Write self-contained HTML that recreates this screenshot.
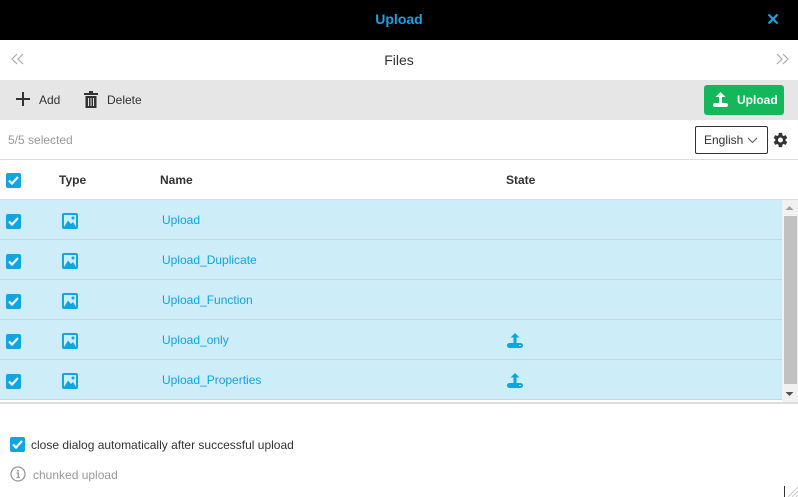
<!DOCTYPE html>
<html><head><meta charset="utf-8"><style>
*{box-sizing:border-box;margin:0;padding:0}
body{width:798px;height:497px;overflow:hidden;background:#fff;font-family:"Liberation Sans",Arial,sans-serif;font-size:12px;color:#333;position:relative}
.abs{position:absolute}
.hdr{left:0;top:0;width:798px;height:40px;background:#000;color:#1ba1e2;font-weight:bold;font-size:14px;text-align:center;line-height:38px}
.files{left:0;top:40px;width:798px;height:40px;text-align:center;line-height:40px;font-size:14px;color:#333}
.tb{left:0;top:80px;width:798px;height:40px;background:#e6e6e6}
.cb{width:15px;height:15px;background:#0ea5e0;border-radius:2px;position:absolute}
.row{position:absolute;left:0;width:782px;height:40px;background:#cdedf9;border-bottom:1px solid #c6d8e0}
.row .nm{position:absolute;left:162px;top:13px;color:#0ea5e0;font-size:12px}
</style></head><body>
<div class="abs hdr">Upload</div>
<svg class="abs" style="left:767px;top:13px" width="12" height="12" viewBox="0 0 12 12"><path d="M1.5 1.5L10.5 10.5M10.5 1.5L1.5 10.5" stroke="#1ba1e2" stroke-width="2.2"/></svg>
<div class="abs files">Files</div>
<svg class="abs" style="left:11px;top:53px" width="14" height="12" viewBox="0 0 14 12"><path d="M6 1L1 6L6 11M12 1L7 6L12 11" stroke="#aaa" stroke-width="1.2" fill="none"/></svg>
<svg class="abs" style="left:775px;top:53px" width="14" height="12" viewBox="0 0 14 12"><path d="M2 1L7 6L2 11M8 1L13 6L8 11" stroke="#aaa" stroke-width="1.2" fill="none"/></svg>
<div class="abs tb"></div>
<svg class="abs" style="left:16px;top:92px" width="14" height="14" viewBox="0 0 14 14"><path d="M7 0V14M0 7H14" stroke="#333" stroke-width="2"/></svg>
<div class="abs" style="left:39px;top:93px;font-size:12px;color:#333">Add</div>
<svg class="abs" style="left:84px;top:91px" width="14" height="17" viewBox="0 0 14 17"><rect x="0" y="2" width="14" height="2" fill="#333"/><rect x="5" y="0" width="4" height="2" fill="#333"/><path d="M1.5 5H12.5V17H1.5Z" fill="#333"/><path d="M4.5 7V15M7 7V15M9.5 7V15" stroke="#e6e6e6" stroke-width="1"/></svg>
<div class="abs" style="left:107px;top:93px;font-size:12px;color:#333">Delete</div>
<div class="abs" style="left:704px;top:85px;width:80px;height:30px;background:#14b85a;border-radius:3px"></div>
<svg class="abs" style="left:712px;top:91px" width="17" height="17" viewBox="0 0 17 17"><path d="M8.5 1L3.5 6H7V12H10V6H13.5Z" fill="#fff"/><rect x="1" y="12" width="15" height="4" rx="2" fill="#fff"/></svg>
<div class="abs" style="left:737px;top:93px;font-size:12px;color:#fff;font-weight:bold">Upload</div>
<div class="abs" style="left:8px;top:133px;color:#999;font-size:12px">5/5 selected</div>
<div class="abs" style="left:695px;top:126px;width:73px;height:28px;border:1px solid #333;border-radius:2px;padding-left:8px;line-height:26px;font-size:12px;color:#333">English</div>
<svg class="abs" style="left:747px;top:137px" width="11" height="7" viewBox="0 0 11 7"><path d="M1 1L5.5 5.5L10 1" stroke="#555" fill="none"/></svg>
<svg class="abs" style="left:771px;top:131px" width="18" height="18" viewBox="0 0 24 24"><path fill="#333" d="M19.4 13a7.5 7.5 0 0 0 0-2l2.3-1.7-2.2-3.8-2.6 1.1a7.5 7.5 0 0 0-1.7-1L14.8 2.5h-4.4l-.4 3.1a7.5 7.5 0 0 0-1.7 1L5.7 5.5 3.5 9.3 5.8 11a7.5 7.5 0 0 0 0 2l-2.3 1.7 2.2 3.8 2.6-1.1a7.5 7.5 0 0 0 1.7 1l.4 3.1h4.4l.4-3.1a7.5 7.5 0 0 0 1.7-1l2.6 1.1 2.2-3.8zM12.6 15.3a3.3 3.3 0 1 1 0-6.6 3.3 3.3 0 0 1 0 6.6z"/></svg>
<div class="abs" style="left:0;top:159px;width:798px;height:1px;background:#ddd"></div>
<div class="cb" style="left:6px;top:173px"></div>
<svg class="abs" style="left:6px;top:173px" width="15" height="15" viewBox="0 0 15 15"><path d="M3 7.5L6 10.5L12 4" stroke="#fff" stroke-width="2.2" fill="none"/></svg>
<div class="abs" style="left:59px;top:173px;font-weight:bold;font-size:12px">Type</div>
<div class="abs" style="left:160px;top:173px;font-weight:bold;font-size:12px">Name</div>
<div class="abs" style="left:506px;top:173px;font-weight:bold;font-size:12px">State</div>
<div class="abs" style="left:0;top:199px;width:798px;height:1px;background:#ddd"></div>

<div class="row" style="top:200px"><span class="nm">Upload</span></div>
<div class="row" style="top:240px"><span class="nm">Upload_Duplicate</span></div>
<div class="row" style="top:280px"><span class="nm">Upload_Function</span></div>
<div class="row" style="top:320px"><span class="nm">Upload_only</span></div>
<div class="row" style="top:360px"><span class="nm">Upload_Properties</span></div>

<svg class="abs" style="left:0;top:200px" width="100" height="200">
<defs>
<g id="c"><rect x="6" y="14" width="15" height="15" rx="2" fill="#0ea5e0"/><path d="M9 21.5L12 24.5L18 18" stroke="#fff" stroke-width="2.2" fill="none"/>
<rect x="62" y="13" width="16" height="16" rx="2" fill="#0ea5e0"/><rect x="64" y="15" width="12" height="12" fill="#cdedf9"/><path d="M64 27L68 20.5L71 24L73 22L76 27Z" fill="#0ea5e0"/><circle cx="73" cy="18" r="1.5" fill="#0ea5e0"/></g>
</defs>
<use href="#c" y="0"/><use href="#c" y="40"/><use href="#c" y="80"/><use href="#c" y="120"/><use href="#c" y="160"/>
</svg>
<svg class="abs" style="left:506px;top:332px" width="18" height="18" viewBox="0 0 18 18"><path d="M9 1L4.5 5.5H7.5V12H10.5V5.5H13.5Z" fill="#0ea5e0"/><rect x="1" y="11" width="16" height="5" rx="2.5" fill="#0ea5e0"/><rect x="13" y="13" width="2" height="1" fill="#cdedf9"/></svg>
<svg class="abs" style="left:506px;top:372px" width="18" height="18" viewBox="0 0 18 18"><path d="M9 1L4.5 5.5H7.5V12H10.5V5.5H13.5Z" fill="#0ea5e0"/><rect x="1" y="11" width="16" height="5" rx="2.5" fill="#0ea5e0"/><rect x="13" y="13" width="2" height="1" fill="#cdedf9"/></svg>

<div class="abs" style="left:782px;top:200px;width:16px;height:202px;background:#f1f1f1"></div>
<div class="abs" style="left:784px;top:216px;width:13px;height:168px;background:#c1c1c1"></div>
<svg class="abs" style="left:785px;top:205px" width="9" height="6"><path d="M0.5 5L4.5 1L8.5 5Z" fill="#a3a3a3"/></svg>
<svg class="abs" style="left:785px;top:391px" width="9" height="6"><path d="M0.5 1L4.5 5L8.5 1Z" fill="#505050"/></svg>
<div class="abs" style="left:0;top:402px;width:798px;height:2px;background:#ddd"></div>

<div class="cb" style="left:10px;top:437px"></div>
<svg class="abs" style="left:10px;top:437px" width="15" height="15" viewBox="0 0 15 15"><path d="M3 7.5L6 10.5L12 4" stroke="#fff" stroke-width="2.2" fill="none"/></svg>
<div class="abs" style="left:31px;top:438px;font-size:12px;color:#333">close dialog automatically after successful upload</div>
<svg class="abs" style="left:10px;top:466px" width="16" height="16" viewBox="0 0 16 16"><circle cx="8" cy="8" r="7" fill="none" stroke="#999" stroke-width="1.3"/><circle cx="8" cy="4.8" r="1" fill="#999"/><path d="M6.5 7H8.3V11.5M6.5 11.5H10" stroke="#999" stroke-width="1.3" fill="none"/></svg>
<div class="abs" style="left:33px;top:468px;font-size:12px;color:#999">chunked upload</div>
<div class="abs" style="left:784px;top:486px;width:1px;height:11px;background:#333"></div>
<svg class="abs" style="left:786px;top:486px" width="12" height="11"><path d="M2 11L12 1M6 11L12 5M10 11L12 9" stroke="#ccc" stroke-width="1"/></svg>
</body></html>
